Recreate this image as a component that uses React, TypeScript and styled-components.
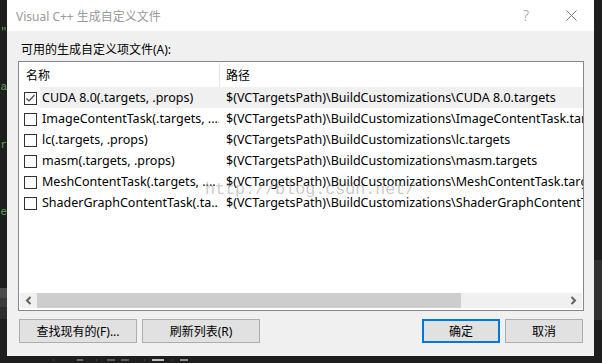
import React from "react";
import styled, { createGlobalStyle } from "styled-components";

const Global = createGlobalStyle`
  html, body { margin: 0; padding: 0; background: #1e1e1e; }
  body {
    width: 602px; height: 363px; overflow: hidden;
    font-family: "Noto Sans", "Noto Sans CJK SC", sans-serif;
  }
  * { box-sizing: border-box; }
`;

const Screen = styled.div`
  display: flex;
  flex-direction: column;
  width: 602px;
  height: 363px;
  background: #1e1e1e;
`;

const Desk = styled.div`
  display: flex;
  height: 356px;
`;

const EditorEdge = styled.div<{ $w: number }>`
  width: ${(p) => p.$w}px;
  display: flex;
  flex-direction: column;
  overflow: hidden;
  background: #1e1e1e;
`;

const EdgeGap = styled.div<{ $h: number; $bg?: string }>`
  height: ${(p) => p.$h}px;
  flex: none;
  background: ${(p) => p.$bg || "transparent"};
`;

const CodeBit = styled.div`
  height: 12px;
  flex: none;
  display: flex;
  justify-content: flex-end;
  font-family: "Liberation Mono", monospace;
  font-size: 11px;
  line-height: 12px;
  color: #57a64a;
  white-space: nowrap;
`;

const Dialog = styled.div`
  width: 587px;
  display: flex;
  flex-direction: column;
  background: #f0f0f0;
`;

const TitleBar = styled.div`
  height: 31px;
  flex: none;
  display: flex;
  align-items: center;
  background: #ffffff;
`;

const Title = styled.div`
  flex: 1;
  padding-left: 9px;
  font-size: 12px;
  color: #999999;
  white-space: nowrap;
`;

const CaptionButton = styled.div<{ $w: number }>`
  width: ${(p) => p.$w}px;
  height: 31px;
  display: flex;
  align-items: center;
  justify-content: center;
  font-size: 14px;
  font-weight: 300;
  color: #9a9a9a;
`;

const Body = styled.div`
  flex: 1;
  display: flex;
  flex-direction: column;
  padding: 11px 10px 0 11px;
`;

const Label = styled.div`
  height: 16px;
  line-height: 16px;
  padding-left: 3px;
  font-size: 12px;
  color: #000;
  margin-bottom: 3px;
`;

const ListBox = styled.div`
  position: relative;
  height: 250px;
  border: 1px solid #828790;
  background: #ffffff;
  display: flex;
  flex-direction: column;
  overflow: hidden;
`;

const HeaderRow = styled.div`
  height: 25px;
  flex: none;
  display: grid;
  grid-template-columns: 200px 1px 1fr;
  align-items: center;
  font-size: 12px;
  color: #000;
`;

const HeaderCell = styled.div<{ $pad: number }>`
  padding-left: ${(p) => p.$pad}px;
  white-space: nowrap;
`;

const HeaderDivider = styled.div`
  height: 24px;
  background: #e5e5e5;
`;

const Rows = styled.div`
  flex: 1;
  display: flex;
  flex-direction: column;
`;

const Row = styled.div`
  height: 21px;
  flex: none;
  display: grid;
  grid-template-columns: 21px 179px 1fr;
  align-items: stretch;
  font-size: 12.5px;
  color: #000;
`;

const CheckCell = styled.div`
  display: flex;
  align-items: center;
  padding-left: 5px;
  padding-top: 1px;
`;

const Box = styled.div`
  width: 13px;
  height: 13px;
  border: 1px solid #333333;
  background: #ffffff;
  display: flex;
  align-items: center;
  justify-content: center;
`;

const Cell = styled.div<{ $sel?: boolean; $pad: number }>`
  display: flex;
  align-items: center;
  padding-left: ${(p) => p.$pad}px;
  background: ${(p) => (p.$sel ? "#f0f0f0" : "transparent")};
  white-space: nowrap;
  overflow: hidden;
`;

const ScrollBar = styled.div`
  height: 15px;
  flex: none;
  margin: 0 1px 2px 1px;
  display: flex;
  background: #f0f0f0;
`;

const ScrollArrow = styled.div`
  width: 17px;
  display: flex;
  align-items: center;
  justify-content: center;
`;

const Track = styled.div`
  flex: 1;
  display: flex;
`;

const Thumb = styled.div`
  width: 424px;
  background: #cdcdcd;
`;

const Watermark = styled.div`
  position: absolute;
  left: 186px;
  top: 118px;
  font-family: "Liberation Mono", monospace;
  font-size: 16.7px;
  line-height: 20px;
  color: rgba(150, 150, 150, 0.5);
  pointer-events: none;
  white-space: nowrap;
`;

const ButtonRow = styled.div`
  display: flex;
  gap: 5px;
  padding: 8px 1px 0 1px;
`;

const Spacer = styled.div`
  flex: 1;
`;

const Button = styled.div<{ $w: number; $default?: boolean }>`
  width: ${(p) => p.$w}px;
  height: 24px;
  display: flex;
  align-items: center;
  justify-content: center;
  background: #e1e1e1;
  border: ${(p) => (p.$default ? "2px solid #0078d7" : "1px solid #adadad")};
  font-size: 12px;
  color: #000;
  white-space: nowrap;
`;

const BottomBar = styled.div`
  height: 7px;
  display: flex;
  align-items: center;
  background: #1e1e1e;
`;

const BarMark = styled.div<{ $w: number; $ml: number; $c: string }>`
  width: ${(p) => p.$w}px;
  height: 2px;
  margin-left: ${(p) => p.$ml}px;
  background: ${(p) => p.$c};
`;

type Item = { checked?: boolean; name: string; path: string };

const items: Item[] = [
  { checked: true, name: "CUDA 8.0(.targets, .props)", path: "$(VCTargetsPath)\\BuildCustomizations\\CUDA 8.0.targets" },
  { name: "ImageContentTask(.targets, ....", path: "$(VCTargetsPath)\\BuildCustomizations\\ImageContentTask.targets" },
  { name: "lc(.targets, .props)", path: "$(VCTargetsPath)\\BuildCustomizations\\lc.targets" },
  { name: "masm(.targets, .props)", path: "$(VCTargetsPath)\\BuildCustomizations\\masm.targets" },
  { name: "MeshContentTask(.targets, ....", path: "$(VCTargetsPath)\\BuildCustomizations\\MeshContentTask.targets" },
  { name: "ShaderGraphContentTask(.ta...", path: "$(VCTargetsPath)\\BuildCustomizations\\ShaderGraphContentTask.targets" },
];

const Check = () => (
  <svg width="11" height="11" viewBox="0 0 11 11">
    <polyline points="1.5,5.5 4,8 9.5,2" fill="none" stroke="#444" strokeWidth="1.2" />
  </svg>
);

const Chevron = ({ dir }: { dir: "l" | "r" }) => (
  <svg width="7" height="9" viewBox="0 0 7 9">
    <polyline
      points={dir === "l" ? "5.5,1 2,4.5 5.5,8" : "1.5,1 5,4.5 1.5,8"}
      fill="none"
      stroke="#606060"
      strokeWidth="2"
    />
  </svg>
);

const CloseIcon = () => (
  <svg width="11" height="11" viewBox="0 0 11 11">
    <path d="M0.5 0.5 L10.5 10.5 M10.5 0.5 L0.5 10.5" stroke="#7a7a7a" strokeWidth="1" />
  </svg>
);

export default function App() {
  return (
    <Screen>
      <Global />
      <Desk>
        <EditorEdge $w={7}>
          <EdgeGap $h={26} />
          <CodeBit>"</CodeBit>
          <EdgeGap $h={43} />
          <CodeBit>a</CodeBit>
          <EdgeGap $h={46} />
          <CodeBit>or</CodeBit>
          <EdgeGap $h={55} />
          <CodeBit>ne</CodeBit>
          <EdgeGap $h={70} />
          <EdgeGap $h={10} $bg="#4b4b4b" />
          <EdgeGap $h={9} $bg="#3a3a3a" />
          <EdgeGap $h={12} $bg="#2c2c2c" />
        </EditorEdge>
        <Dialog>
          <TitleBar>
            <Title>Visual C++ 生成自定义文件</Title>
            <CaptionButton $w={44}>?</CaptionButton>
            <CaptionButton $w={46}>
              <CloseIcon />
            </CaptionButton>
          </TitleBar>
          <Body>
            <Label>可用的生成自定义项文件(A):</Label>
            <ListBox>
              <HeaderRow>
                <HeaderCell $pad={7}>名称</HeaderCell>
                <HeaderDivider />
                <HeaderCell $pad={6}>路径</HeaderCell>
              </HeaderRow>
              <Rows>
                {items.map((it, i) => (
                  <Row key={i}>
                    <CheckCell>
                      <Box>{it.checked && <Check />}</Box>
                    </CheckCell>
                    <Cell $pad={2} $sel={i === 0}>{it.name}</Cell>
                    <Cell $pad={7} $sel={i === 0}>{it.path}</Cell>
                  </Row>
                ))}
              </Rows>
              <ScrollBar>
                <ScrollArrow>
                  <Chevron dir="l" />
                </ScrollArrow>
                <Track>
                  <Thumb />
                </Track>
                <ScrollArrow>
                  <Chevron dir="r" />
                </ScrollArrow>
              </ScrollBar>
              <Watermark>http://blog.csdn.net/</Watermark>
            </ListBox>
            <ButtonRow>
              <Button $w={118}>查找现有的(F)...</Button>
              <Button $w={118}>刷新列表(R)</Button>
              <Spacer />
              <Button $w={78} $default>确定</Button>
              <Button $w={78}>取消</Button>
            </ButtonRow>
          </Body>
        </Dialog>
        <EditorEdge $w={8}>
          <EdgeGap $h={260} />
          <EdgeGap $h={60} $bg="#2f2f2f" />
        </EditorEdge>
      </Desk>
      <BottomBar>
        <BarMark $w={1} $ml={53} $c="#3f3f46" />
        <BarMark $w={6} $ml={23} $c="#6a6a6a" />
        <BarMark $w={1} $ml={13} $c="#3f3f46" />
        <BarMark $w={8} $ml={10} $c="#5a5a5a" />
        <BarMark $w={8} $ml={6} $c="#5a5a5a" />
        <BarMark $w={1} $ml={15} $c="#3f3f46" />
        <BarMark $w={12} $ml={7} $c="#bdbdbd" />
        <BarMark $w={1} $ml={8} $c="#3f3f46" />
        <BarMark $w={8} $ml={7} $c="#8a8a8a" />
      </BottomBar>
    </Screen>
  );
}
